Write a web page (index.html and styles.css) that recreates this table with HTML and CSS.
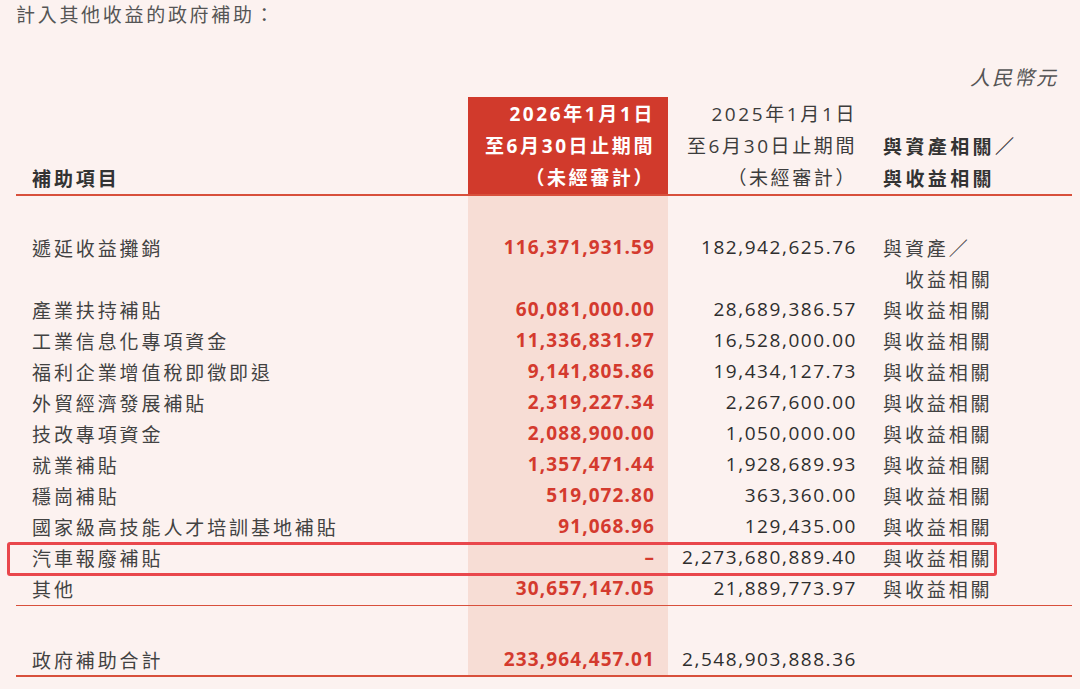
FILE: index.html
```html
<!DOCTYPE html>
<html lang="zh-Hant">
<head>
<meta charset="utf-8">
<title>計入其他收益的政府補助</title>
<link rel="stylesheet" href="styles.css">
</head>
<body>
<div class="page">
  <p class="title">計入其他收益的政府補助：</p>
  <p class="unit">人民幣元</p>
  <table class="grants">
    <thead>
      <tr>
        <th class="label">補助項目</th>
        <th class="cur">2026年1月1日<br>至6月30日止期間<br>（未經審計）</th>
        <th class="prev">2025年1月1日<br>至6月30日止期間<br>（未經審計）</th>
        <th class="rel">與資產相關／<br>與收益相關</th>
      </tr>
    </thead>
    <tbody>
      <tr class="first">
        <td class="label">遞延收益攤銷</td>
        <td class="cur">116,371,931.59</td>
        <td class="prev">182,942,625.76</td>
        <td class="rel">與資產／<span class="indent">收益相關</span></td>
      </tr>
      <tr><td class="label">產業扶持補貼</td><td class="cur">60,081,000.00</td><td class="prev">28,689,386.57</td><td class="rel">與收益相關</td></tr>
      <tr><td class="label">工業信息化專項資金</td><td class="cur">11,336,831.97</td><td class="prev">16,528,000.00</td><td class="rel">與收益相關</td></tr>
      <tr><td class="label">福利企業增值稅即徵即退</td><td class="cur">9,141,805.86</td><td class="prev">19,434,127.73</td><td class="rel">與收益相關</td></tr>
      <tr><td class="label">外貿經濟發展補貼</td><td class="cur">2,319,227.34</td><td class="prev">2,267,600.00</td><td class="rel">與收益相關</td></tr>
      <tr><td class="label">技改專項資金</td><td class="cur">2,088,900.00</td><td class="prev">1,050,000.00</td><td class="rel">與收益相關</td></tr>
      <tr><td class="label">就業補貼</td><td class="cur">1,357,471.44</td><td class="prev">1,928,689.93</td><td class="rel">與收益相關</td></tr>
      <tr><td class="label">穩崗補貼</td><td class="cur">519,072.80</td><td class="prev">363,360.00</td><td class="rel">與收益相關</td></tr>
      <tr><td class="label">國家級高技能人才培訓基地補貼</td><td class="cur">91,068.96</td><td class="prev">129,435.00</td><td class="rel">與收益相關</td></tr>
      <tr class="marked"><td class="label">汽車報廢補貼<span class="mark"></span></td><td class="cur">–</td><td class="prev">2,273,680,889.40</td><td class="rel">與收益相關</td></tr>
      <tr class="last"><td class="label">其他</td><td class="cur">30,657,147.05</td><td class="prev">21,889,773.97</td><td class="rel">與收益相關</td></tr>
      <tr class="total"><td class="label">政府補助合計</td><td class="cur">233,964,457.01</td><td class="prev">2,548,903,888.36</td><td class="rel"></td></tr>
    </tbody>
  </table>
</div>
</body>
</html>
```
FILE: styles.css
```css
html, body {
  margin: 0;
  padding: 0;
  background: #fcf2f0;
}
body {
  font-family: "Noto Sans CJK TC", "Noto Sans CJK SC", sans-serif;
  color: #424242;
  width: 1080px;
  height: 689px;
  overflow: hidden;
}
.page {
  padding: 0 8px 0 16px;
  position: relative;
}
.title {
  margin: 0;
  font-size: 19px;
  line-height: 28px;
  letter-spacing: 2.7px;
  color: #555;
  font-weight: 400;
}
.unit {
  margin: 35px 0 6px;
  text-align: right;
  font-size: 20px;
  line-height: 28px;
  letter-spacing: 2px;
  font-style: italic;
  color: #555;
  padding-right: 14px;
}
.grants {
  width: 1056px;
  border-collapse: collapse;
  table-layout: fixed;
}
.grants th, .grants td {
  padding: 0;
  font-size: 19px;
  letter-spacing: 2.9px;
}
.grants th {
  line-height: 32px;
  padding-top: 1px;
  vertical-align: bottom;
  font-weight: 700;
  border-bottom: 2px solid #d8503c;
  color: #333;
}
.grants td {
  line-height: 31px;
  vertical-align: top;
}
.label {
  width: 436px;
  padding-left: 16px !important;
  text-align: left;
}
.cur {
  width: 187px;
  padding-right: 13px !important;
  text-align: right;
  background: #f7ddd5;
}
.prev {
  width: 189px;
  padding-right: 13px !important;
  text-align: right;
}
.rel {
  padding-left: 13px !important;
  text-align: left;
}
th.rel {
  letter-spacing: 3.4px;
}
th.cur {
  background: #d13a2c;
  color: #fff;
  font-weight: 700;
}
th.prev {
  font-weight: 400;
  color: #3c3c3c;
}
th.cur, th.prev {
  font-family: "Open Sans", "Noto Sans CJK TC", sans-serif;
  letter-spacing: 2.6px;
}
td.cur, td.prev {
  font-family: "Open Sans", sans-serif;
  font-size: 19px;
  letter-spacing: 1.1px;
}
td.cur {
  color: #d43a2e;
  font-weight: 700;
}
td.prev {
  color: #2e2e2e;
  letter-spacing: 1.55px;
}
.indent {
  display: block;
  padding-left: 22px;
}
.first td {
  padding-top: 36px;
}
.last td {
  padding-bottom: 1px;
  border-bottom: 1px solid #d8503c;
}
.total td {
  padding-top: 38px;
  border-bottom: 2px solid #d8503c;
}
.marked .label {
  position: relative;
}
.mark {
  position: absolute;
  left: -9px;
  top: 0;
  width: 984px;
  height: 28px;
  border: 3px solid #e9474c;
  border-radius: 3px;
  pointer-events: none;
}
```
